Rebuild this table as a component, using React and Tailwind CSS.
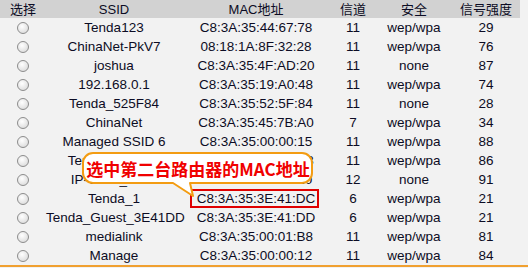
import React from "react";

const rows = [
  ["Tenda123", "C8:3A:35:44:67:78", "11", "wep/wpa", "29"],
  ["ChinaNet-PkV7", "08:18:1A:8F:32:28", "11", "wep/wpa", "76"],
  ["joshua", "C8:3A:35:4F:AD:20", "11", "none", "87"],
  ["192.168.0.1", "C8:3A:35:19:A0:48", "11", "wep/wpa", "74"],
  ["Tenda_525F84", "C8:3A:35:52:5F:84", "11", "none", "28"],
  ["ChinaNet", "C8:3A:35:45:7B:A0", "7", "wep/wpa", "34"],
  ["Managed SSID 6", "C8:3A:35:00:00:15", "11", "wep/wpa", "88"],
  ["Tenda_3E41E3", "C8:3A:35:3E:41:E3", "11", "wep/wpa", "86"],
  ["IP-COM_0000", "C8:3A:35:00:00:20", "12", "none", "91"],
  ["Tenda_1", "C8:3A:35:3E:41:DC", "6", "wep/wpa", "21"],
  ["Tenda_Guest_3E41DD", "C8:3A:35:3E:41:DD", "6", "wep/wpa", "21"],
  ["medialink", "C8:3A:35:00:01:B8", "11", "wep/wpa", "81"],
  ["Manage", "C8:3A:35:00:00:12", "11", "wep/wpa", "84"],
];

function Radio() {
  return (
    <span className="block w-[12px] h-[12px] rounded-full border border-[#8c8c8c] bg-[radial-gradient(circle_at_40%_35%,#ffffff,#d4d4d4)]" />
  );
}

export default function App() {
  return (
    <div
      className="relative w-[528px] h-[268px] overflow-hidden bg-[#f2f2f2] text-[13.5px] text-[#0c0c24]"
      style={{ fontFamily: '"Liberation Sans", "Noto Sans CJK SC", sans-serif' }}
    >
      <div className="flex h-[18px] w-[520px] items-center bg-[#d2d2d2] text-[13px] leading-none">
        <div className="w-[46px] text-center">选择</div>
        <div className="w-[136px] text-center">SSID</div>
        <div className="w-[148px] text-center">MAC地址</div>
        <div className="w-[46px] text-center">信道</div>
        <div className="w-[76px] text-center">安全</div>
        <div className="w-[68px] text-center">信号强度</div>
      </div>
      <div className="flex flex-col">
        {rows.map((r, i) => (
          <div key={i} className="flex h-[19px] items-center leading-none">
            <div className="flex w-[46px] justify-center">
              <Radio />
            </div>
            <div className="w-[136px] text-center">{r[0]}</div>
            <div className="w-[148px] text-center">{r[1]}</div>
            <div className="w-[46px] text-center">{r[2]}</div>
            <div className="w-[76px] text-center">{r[3]}</div>
            <div className="w-[68px] text-center">{r[4]}</div>
          </div>
        ))}
      </div>
      <div className="h-[2px] w-full bg-[#f0a030]" />

      {/* red highlight box */}
      <div className="absolute left-[190px] top-[189px] h-[19px] w-[129px] border-2 border-[#e00000]" />

      {/* callout */}
      <svg className="absolute left-0 top-0" width="528" height="268">
        <path
          d="M93 153 H302 A10 10 0 0 1 312 163 V173 A10 10 0 0 1 302 183 H190 L193 196 L173 183 H93 A10 10 0 0 1 83 173 V163 A10 10 0 0 1 93 153 Z"
          fill="#ffffff"
          stroke="#f39c12"
          strokeWidth="2"
          strokeLinejoin="round"
        />
      </svg>
      <div
        className="absolute left-[84px] top-[155px] flex h-[26px] w-[228px] items-center justify-center text-[17px] font-bold leading-none text-[#f00000]"
        style={{ fontFamily: '"Noto Sans CJK SC", "Liberation Sans", sans-serif' }}
      >
        选中第二台路由器的MAC地址
      </div>
    </div>
  );
}
